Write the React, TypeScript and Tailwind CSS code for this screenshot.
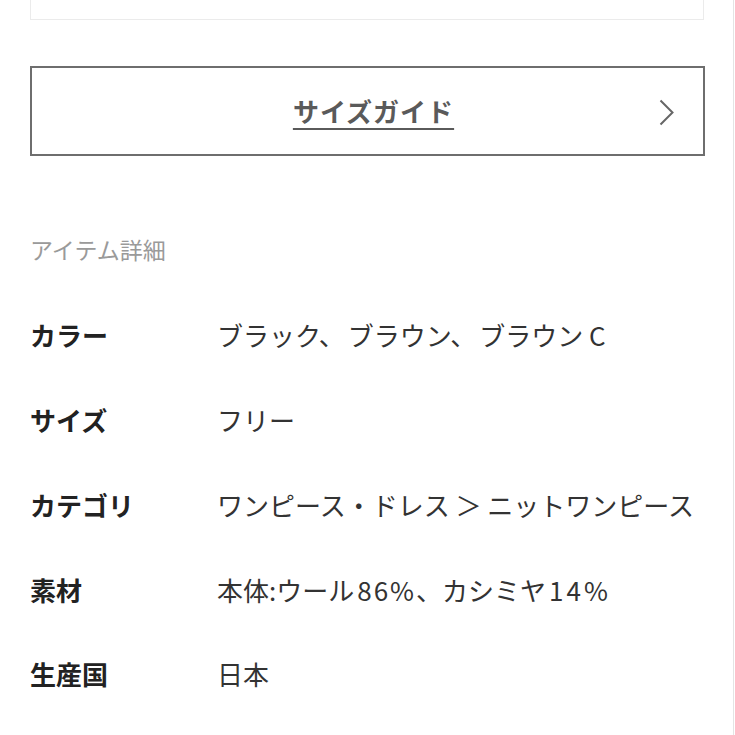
import type { ReactNode } from 'react';

const details: { label: string; value: ReactNode }[] = [
  {
    label: 'カラー',
    value: (
      <>
        ブラック<span className="mr-[3px]">、</span>ブラウン<span className="mr-[3px]">、</span>ブラウン{' '}
        <span>C</span>
      </>
    ),
  },
  { label: 'サイズ', value: 'フリー' },
  { label: 'カテゴリ', value: 'ワンピース・ドレス ＞ ニットワンピース' },
  {
    label: '素材',
    value: (
      <>
        本体:ウール<span className="ml-[3px] tracking-[2px]">86%</span>、カシミヤ<span className="ml-[3px] tracking-[3px]">14%</span>
      </>
    ),
  },
  { label: '生産国', value: '日本' },
];

export default function App() {
  return (
    <div
      className="relative h-[735px] w-[735px] overflow-hidden bg-white"
      style={{ fontFamily: '"Noto Sans CJK JP", "Noto Sans", sans-serif' }}
    >
      {/* right edge line */}
      <div className="absolute right-[1px] top-0 h-full w-px bg-[#e4e4e4]" />

      <div className="pl-[30px] pr-[31px]">
        {/* previous card (cut off at top) */}
        <div className="h-[20px] w-[674px] border-x border-b border-[#ebebeb]" />

        {/* size guide button */}
        <button className="relative mt-[46px] flex h-[90px] w-[675px] items-center justify-center border-2 border-[#6e6e6e] bg-white">
          <span className="ml-[12px] text-[26px] font-bold leading-none tracking-[1px] text-[#5a5a5a] underline decoration-2 underline-offset-[6px]">
            サイズガイド
          </span>
          <svg
            className="absolute right-[29px] top-[31px]"
            width="15"
            height="27"
            viewBox="0 0 15 27"
            fill="none"
          >
            <polyline points="1.5,1.5 13.5,13.5 1.5,25.5" stroke="#666" strokeWidth="2" />
          </svg>
        </button>

        {/* item details */}
        <h2 className="mt-[77px] h-[32px] text-[23px] leading-[32px] text-[#9a9a9a]">アイテム詳細</h2>

        <dl className="mt-[28px]">
          {details.map((row) => (
            <div key={row.label} className="flex h-[84.75px] items-center">
              <dt className="w-[187px] shrink-0 text-[26px] font-bold leading-none text-[#222]">{row.label}</dt>
              <dd className="whitespace-nowrap text-[26px] leading-none text-[#333]">{row.value}</dd>
            </div>
          ))}
        </dl>
      </div>
    </div>
  );
}
